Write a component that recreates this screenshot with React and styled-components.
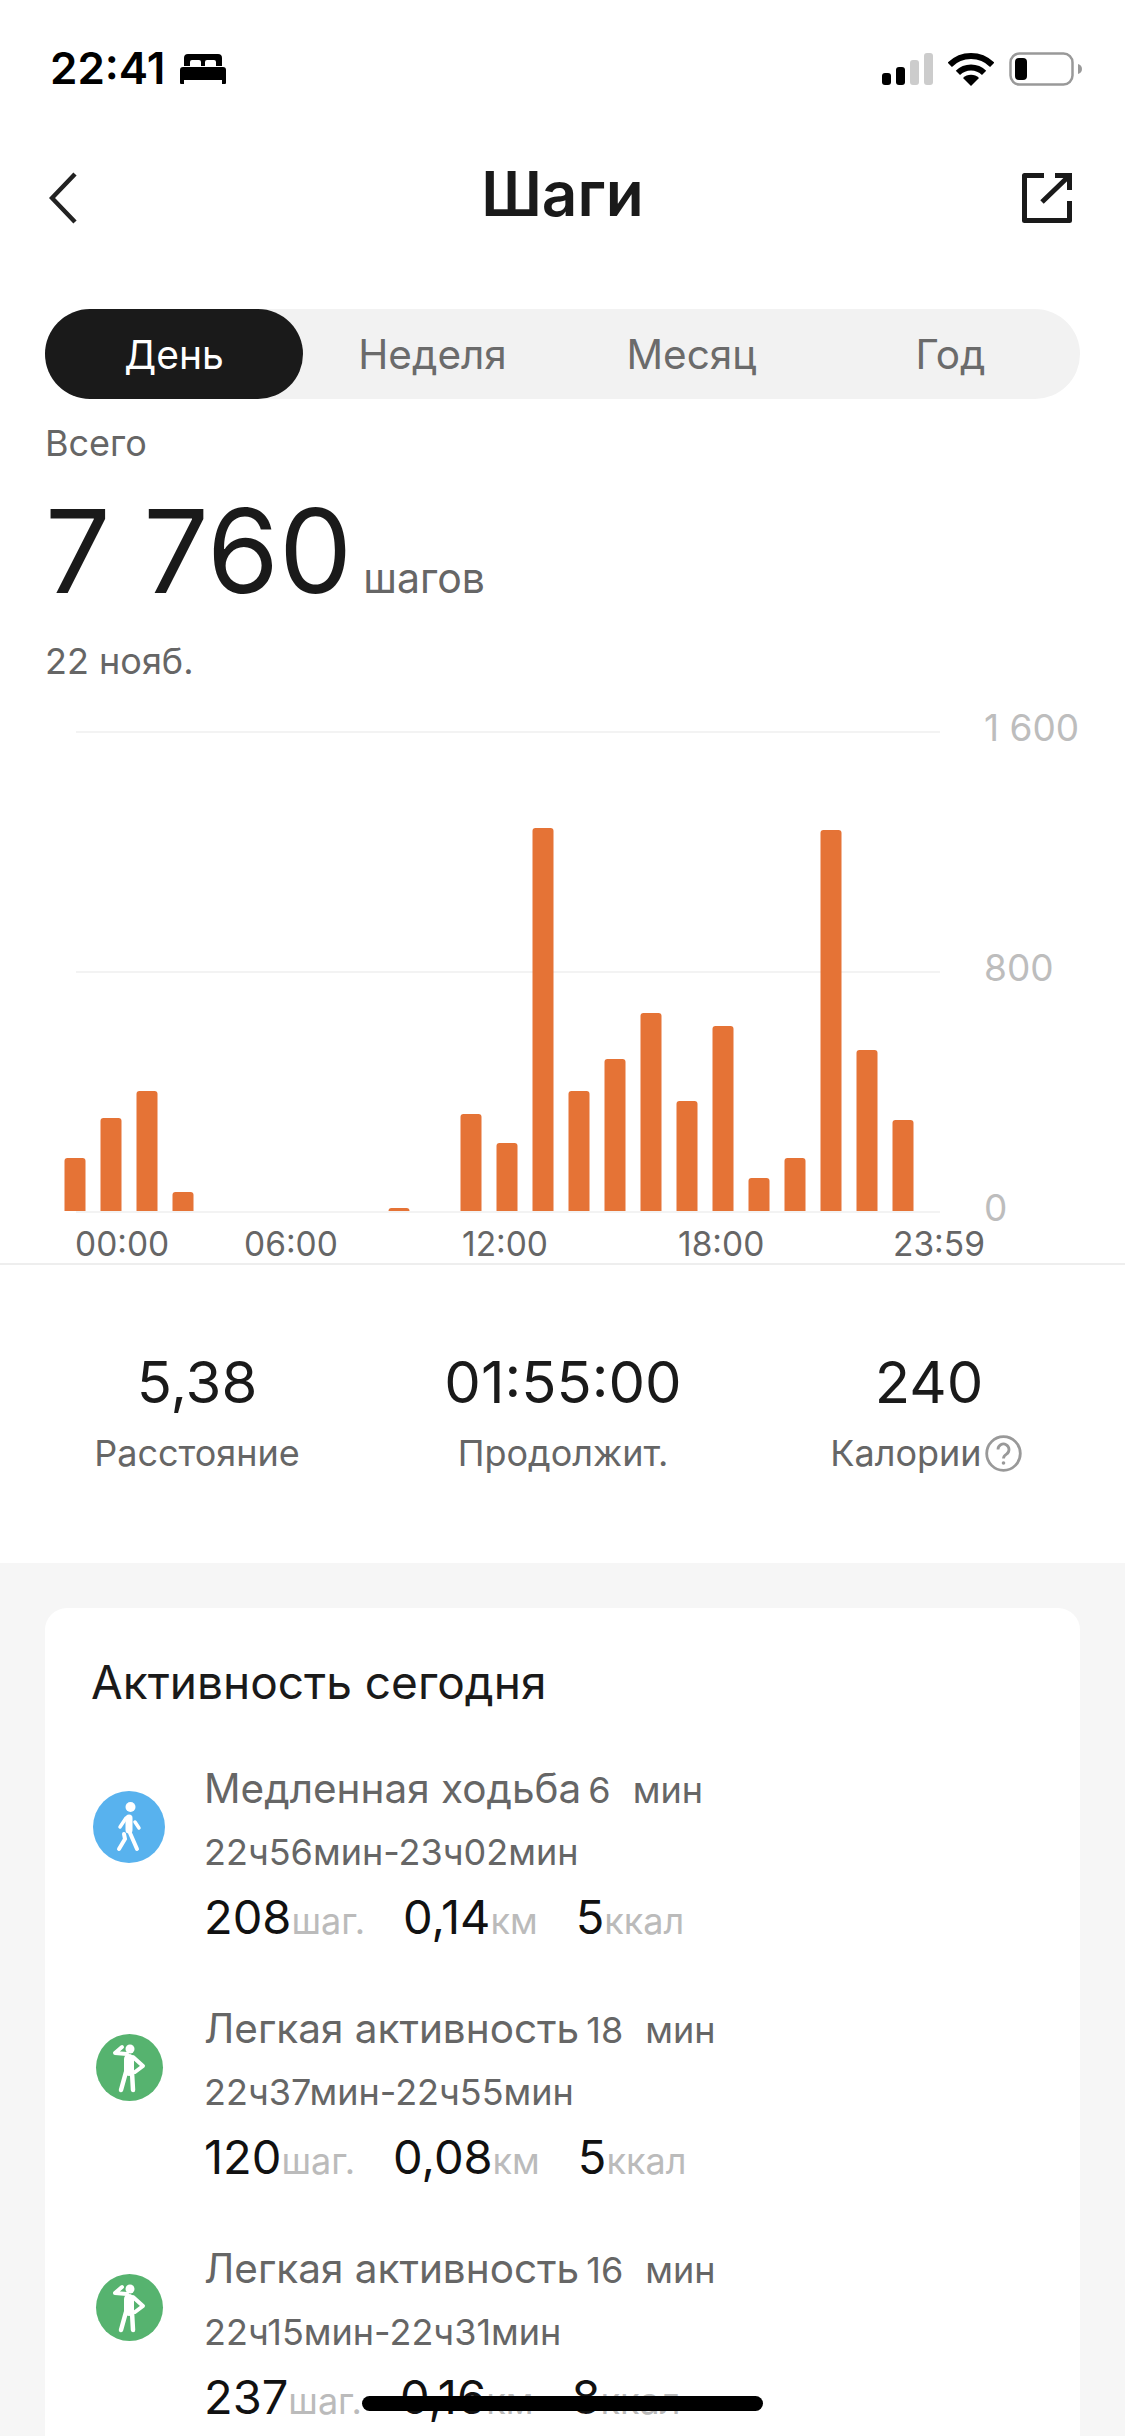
import React from 'react';
import styled, { createGlobalStyle } from 'styled-components';

const Global = createGlobalStyle`
  html, body { margin: 0; padding: 0; background: #fff; }
  * { box-sizing: border-box; }
  #root { font-family: Inter, "Noto Sans", "Liberation Sans", sans-serif; }
`;

const Page = styled.div`
  position: relative;
  width: 1125px;
  height: 2436px;
  overflow: hidden;
  background: #fff;
  color: #1a1a1a;
`;
const StatusBar = styled.div`
  height: 100px;
  padding: 52px 43px 0 50px;
  display: flex;
  justify-content: space-between;
  align-items: flex-start;
`;
const StatusGroup = styled.div`
  display: flex;
  align-items: center;
  gap: ${p => p.$gap}px;
`;
const Clock = styled.span`
  font-size: 44px;
  line-height: 33px;
  font-weight: 600;
  color: #000;
`;
const Nav = styled.div`
  height: 196px;
  padding: 0 53px 0 49px;
  display: grid;
  grid-template-columns: 1fr auto 1fr;
  align-items: center;
`;
const NavEnd = styled.div`
  display: flex;
  justify-content: ${p => (p.$right ? 'flex-end' : 'flex-start')};
`;
const Title = styled.h1`
  margin: 0 0 8px;
  transform: translateX(2px);
  font-size: 62px;
  font-weight: 600;
  line-height: 70px;
  color: #1a1a1a;
`;
const Tabs = styled.div`
  margin: 13px 45px 0;
  height: 90px;
  border-radius: 45px;
  background: #f2f2f2;
  display: grid;
  grid-template-columns: 258px 1fr 1fr 1fr;
`;
const Tab = styled.div`
  border-radius: 45px;
  display: flex;
  align-items: center;
  justify-content: center;
  font-size: ${p => (p.$active ? 39 : 40.5)}px;
  background: ${p => (p.$active ? '#1a1a1a' : 'transparent')};
  color: ${p => (p.$active ? '#fff' : '#6b6b6b')};
`;
const Summary = styled.div`
  padding: 23px 45px 0 45px;
  height: 301px;
`;
const Caption = styled.div`
  font-size: 36px;
  line-height: 42px;
  color: #666;
`;
const TotalRow = styled.div`
  display: flex;
  align-items: baseline;
  gap: 11px;
  margin-top: 12px;
  height: 150px;
  line-height: 150px;
`;
const TotalValue = styled.span`
  font-size: 116px;
  font-weight: 400;
  color: #1a1a1a;
`;
const TotalUnit = styled.span`
  font-size: 41px;
  color: #666;
`;
const DateCaption = styled(Caption)`
  margin-top: 14px;
`;
const ChartBox = styled.div`
  height: 565px;
  border-bottom: 2px solid #eeeeee;
`;
const ChartSvg = styled.svg`
  display: block;
  width: 1125px;
  height: 563px;
  font-family: Inter, "Liberation Sans", sans-serif;
`;
const Stats = styled.div`
  height: 298px;
  padding: 0 14px;
  display: grid;
  grid-template-columns: repeat(3, 366px);
  align-items: start;
`;
const Stat = styled.div`
  padding-top: 81px;
  display: flex;
  flex-direction: column;
  align-items: center;
`;
const StatValue = styled.div`
  font-size: 58px;
  line-height: 72px;
  color: #1a1a1a;
`;
const StatLabel = styled.div`
  margin-top: 13px;
  font-size: 36px;
  line-height: 44px;
  color: #666;
  display: flex;
  align-items: center;
  gap: 3px;
`;
const CalorieLabel = styled(StatLabel)`
  margin-right: 6px;
`;
const Section = styled.div`
  background: #f6f6f6;
  padding: 45px 45px 0;
  height: 873px;
`;
const Card = styled.div`
  background: #fff;
  border-radius: 22px;
  padding: 43px 0 0 46px;
  height: 900px;
`;
const CardTitle = styled.h2`
  margin: 0 0 46px;
  font-size: 46px;
  line-height: 62px;
  font-weight: 400;
  color: #1a1a1a;
`;
const Row = styled.div`
  display: flex;
  height: 192px;
  margin: 0 0 48px -46px;
`;
const IconSlot = styled.div`
  flex: none;
  width: 159px;
  height: 136px;
  padding-left: 9px;
  display: flex;
  align-items: center;
  justify-content: center;
`;
const RoundIcon = styled.div`
  width: ${p => p.$size}px;
  height: ${p => p.$size}px;
  border-radius: 50%;
  background: ${p => p.$color};
  svg { display: block; width: 100%; height: 100%; }
`;
const NameLine = styled.div`
  display: flex;
  align-items: baseline;
  height: 62px;
  line-height: 60px;
  color: #666;
  font-size: 40.5px;
  white-space: nowrap;
`;
const Minutes = styled.span`
  margin-left: 7px;
  font-size: 36px;
  word-spacing: 12px;
`;
const TimeLine = styled.div`
  height: 62px;
  line-height: 62px;
  font-size: 36px;
  color: #666;
  white-space: nowrap;
`;
const Metrics = styled.div`
  display: flex;
  align-items: baseline;
  gap: 38px;
  height: 68px;
  line-height: 68px;
`;
const Metric = styled.span`
  white-space: nowrap;
`;
const MetricValue = styled.span`
  font-size: 47px;
  color: #111;
`;
const MetricUnit = styled.span`
  font-size: 36px;
  color: #bbb;
`;
const HomeBar = styled.div`
  position: absolute;
  left: 362px;
  top: 2396px;
  width: 401px;
  height: 15px;
  border-radius: 8px;
  background: #000;
`;

const bars = [
  [0, 53], [1, 93], [2, 120], [3, 19], [9, 3], [11, 97], [12, 68], [13, 383],
  [14, 120], [15, 152], [16, 198], [17, 110], [18, 185], [19, 33], [20, 53],
  [21, 381], [22, 161], [23, 91],
];
const yLabels = [['1 600', 741], ['800', 981], ['0', 1221]];
const xLabels = [['00:00', 75], ['06:00', 244], ['12:00', 462], ['18:00', 678], ['23:59', 893]];
const ORIGIN = 700;

const Chart = () => (
  <ChartSvg viewBox={`0 ${ORIGIN} 1125 563`}>
    {[731, 971, 1211].map(y => (
      <rect key={y} x="76" y={y} width="864" height="2" fill="#f3f3f3" />
    ))}
    {bars.map(([i, h]) => (
      <path
        key={i}
        d={`M${64.5 + i * 36} 1211v${-(h - 3 > 0 ? h - 3 : 0)}q0 -3 3 -3h15q3 0 3 3v${h - 3 > 0 ? h - 3 : 0}z`}
        fill="#e57336"
      />
    ))}
    {yLabels.map(([t, y]) => (
      <text key={t} x="984" y={y} fontSize="37" fill="#bdbdbd">{t}</text>
    ))}
    {xLabels.map(([t, x]) => (
      <text key={t} x={x} y="1256" fontSize="33.5" fill="#666">{t}</text>
    ))}
  </ChartSvg>
);

const Bed = () => (
  <svg width="46" height="31" viewBox="0 0 46 31">
    <path d="M4 13V5a4 4 0 0 1 4-4h30a4 4 0 0 1 4 4v8h-6V9a2 2 0 0 0-2-2h-7a2 2 0 0 0-2 2v4h-4V9a2 2 0 0 0-2-2h-7a2 2 0 0 0-2 2v4z" fill="#000" />
    <path d="M3 14h40a3 3 0 0 1 3 3v10H0V17a3 3 0 0 1 3-3zM0 27h4v4H1a1 1 0 0 1-1-1zM42 27h4v3a1 1 0 0 1-1 1h-3z" fill="#000" />
  </svg>
);
const Signal = () => (
  <svg width="51" height="32" viewBox="0 0 51 32">
    <rect x="0" y="20" width="9" height="12" rx="3" fill="#000" />
    <rect x="14" y="14" width="9" height="18" rx="3" fill="#000" />
    <rect x="28" y="7" width="9" height="25" rx="3" fill="#ccc" />
    <rect x="42" y="0" width="9" height="32" rx="3" fill="#ccc" />
  </svg>
);
const Wifi = () => (
  <svg width="46" height="33" viewBox="0 0 46 33">
    <path d="M1.8 11.8a30 30 0 0 1 42.4 0" fill="none" stroke="#000" strokeWidth="6" />
    <path d="M9.9 19.9a18.5 18.5 0 0 1 26.2 0" fill="none" stroke="#000" strokeWidth="6" />
    <path d="M23 33l-8-8a11.3 11.3 0 0 1 16 0z" fill="#000" />
  </svg>
);
const Battery = () => (
  <svg width="73" height="34" viewBox="0 0 73 34">
    <rect x="1.5" y="1.5" width="62" height="31" rx="9" fill="none" stroke="#999" strokeWidth="2.5" />
    <rect x="6" y="6" width="12" height="22" rx="4" fill="#000" />
    <path d="M69 12c2.500 .6 4 2.600 4 5s-1.500 4.400-4 5z" fill="#999" />
  </svg>
);
const Back = () => (
  <svg width="28" height="52" viewBox="0 0 28 52">
    <path d="M26 2L3 26l23 24" fill="none" stroke="#222" strokeWidth="4.500" />
  </svg>
);
const Share = () => (
  <svg width="50" height="50" viewBox="0 0 50 50">
    <path d="M22 2.500H2.500v45h45V28" fill="none" stroke="#1a1a1a" strokeWidth="5" strokeLinejoin="round" />
    <path d="M33 2.500h14.500V17M47 3L20 29" fill="none" stroke="#1a1a1a" strokeWidth="5" />
  </svg>
);
const Help = () => (
  <svg width="37" height="37" viewBox="0 0 37 37">
    <circle cx="18.500" cy="18.500" r="16.800" fill="none" stroke="#999" strokeWidth="2.800" />
    <path d="M13 14.500a5.500 5.500 0 1 1 8.500 4.600c-2 1.300-3 2.300-3 4.400" fill="none" stroke="#999" strokeWidth="2.800" />
    <circle cx="18.500" cy="28" r="1.800" fill="#999" />
  </svg>
);
const Walker = () => (
  <svg viewBox="0 0 72 72">
    <circle cx="37.500" cy="16" r="5" fill="#fff" />
    <g fill="none" stroke="#fff" strokeLinecap="round">
      <path d="M36 27v12" strokeWidth="7" />
      <path d="M33 27l-6 9" strokeWidth="3.500" />
      <path d="M42 31l4 6" strokeWidth="3.500" />
      <path d="M37 42l7 16" strokeWidth="4" />
      <path d="M31 43l1 5-6 10" strokeWidth="4" />
    </g>
  </svg>
);
const Stretch = () => (
  <svg viewBox="0 0 67 67">
    <circle cx="34" cy="15" r="4.500" fill="#fff" />
    <g fill="none" stroke="#fff" strokeLinecap="round" strokeLinejoin="round">
      <path d="M33 25v12" strokeWidth="10" />
      <path d="M31 20l-12-1 7-6" strokeWidth="4" />
      <path d="M37 23l10 9-8 6" strokeWidth="4" />
      <path d="M30 38l-5 18" strokeWidth="4.500" />
      <path d="M36 38l1 18" strokeWidth="4.500" />
    </g>
  </svg>
);

const rows = [
  { icon: 'walk', name: 'Медленная ходьба', min: '6 мин', time: '22ч56мин-23ч02мин', m: [['208', 'шаг.'], ['0,14', 'км'], ['5', 'ккал']] },
  { icon: 'fit', name: 'Легкая активность', min: '18 мин', time: '22ч37мин-22ч55мин', m: [['120', 'шаг.'], ['0,08', 'км'], ['5', 'ккал']] },
  { icon: 'fit', name: 'Легкая активность', min: '16 мин', time: '22ч15мин-22ч31мин', m: [['237', 'шаг.'], ['0,16', 'км'], ['8', 'ккал']] },
];

export default function App() {
  return (
    <Page>
      <Global />
      <StatusBar>
        <StatusGroup $gap={15}>
          <Clock>22:41</Clock>
          <Bed />
        </StatusGroup>
        <StatusGroup $gap={15}>
          <Signal />
          <Wifi />
          <Battery />
        </StatusGroup>
      </StatusBar>
      <Nav>
        <NavEnd><Back /></NavEnd>
        <Title>Шаги</Title>
        <NavEnd $right><Share /></NavEnd>
      </Nav>
      <Tabs>
        <Tab $active>День</Tab>
        <Tab>Неделя</Tab>
        <Tab>Месяц</Tab>
        <Tab>Год</Tab>
      </Tabs>
      <Summary>
        <Caption>Всего</Caption>
        <TotalRow>
          <TotalValue>7 760</TotalValue>
          <TotalUnit>шагов</TotalUnit>
        </TotalRow>
        <DateCaption>22 нояб.</DateCaption>
      </Summary>
      <ChartBox>
        <Chart />
      </ChartBox>
      <Stats>
        <Stat>
          <StatValue>5,38</StatValue>
          <StatLabel>Расстояние</StatLabel>
        </Stat>
        <Stat>
          <StatValue>01:55:00</StatValue>
          <StatLabel>Продолжит.</StatLabel>
        </Stat>
        <Stat>
          <StatValue>240</StatValue>
          <CalorieLabel>Калории<Help /></CalorieLabel>
        </Stat>
      </Stats>
      <Section>
        <Card>
          <CardTitle>Активность сегодня</CardTitle>
          {rows.map(r => (
            <Row key={r.time}>
              <IconSlot>
                {r.icon === 'walk' ? (
                  <RoundIcon $size={72} $color="#58b2ee"><Walker /></RoundIcon>
                ) : (
                  <RoundIcon $size={67} $color="#56b36f"><Stretch /></RoundIcon>
                )}
              </IconSlot>
              <div>
                <NameLine>
                  {r.name}
                  <Minutes>{r.min}</Minutes>
                </NameLine>
                <TimeLine>{r.time}</TimeLine>
                <Metrics>
                  {r.m.map(([v, u]) => (
                    <Metric key={u}>
                      <MetricValue>{v}</MetricValue>
                      <MetricUnit>{u}</MetricUnit>
                    </Metric>
                  ))}
                </Metrics>
              </div>
            </Row>
          ))}
        </Card>
      </Section>
      <HomeBar />
    </Page>
  );
}
